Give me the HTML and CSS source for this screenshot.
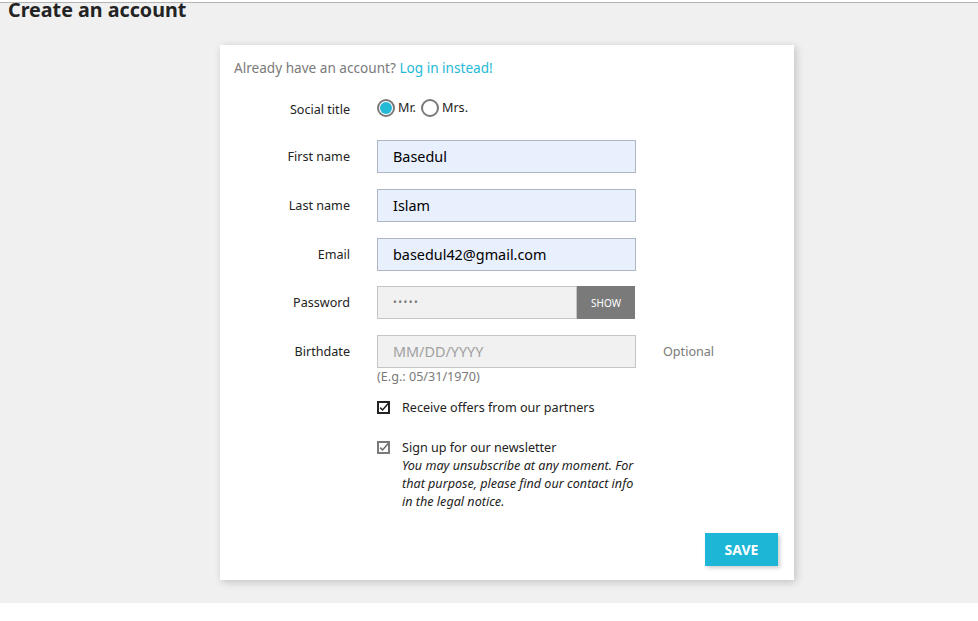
FILE: index.html
```html
<!DOCTYPE html>
<html>
<head>
<meta charset="utf-8">
<link rel="stylesheet" href="styles.css">
</head>
<body>
<div class="topline"></div>
<main class="wrapper">
  <h1 class="page-title">Create an account</h1>
  <section class="card">
    <p class="login-hint">Already have an account? <a href="#" class="link">Log in instead!</a></p>
    <form class="form">
      <div class="row row-social">
        <label class="label">Social title</label>
        <div class="radios">
          <span class="radio checked"><span class="dot"></span></span><span class="radio-text">Mr.</span>
          <span class="radio"></span><span class="radio-text">Mrs.</span>
        </div>
      </div>
      <div class="row">
        <label class="label">First name</label>
        <div class="input autofill">Basedul</div>
      </div>
      <div class="row">
        <label class="label">Last name</label>
        <div class="input autofill">Islam</div>
      </div>
      <div class="row">
        <label class="label">Email</label>
        <div class="input autofill">basedul42@gmail.com</div>
      </div>
      <div class="row">
        <label class="label">Password</label>
        <div class="pw-group">
          <div class="input plain pw">•••••</div>
          <button type="button" class="show-btn">SHOW</button>
        </div>
      </div>
      <div class="row row-birth">
        <label class="label">Birthdate</label>
        <div class="birth-col">
          <div class="input plain placeholder">MM/DD/YYYY</div>
          <div class="hint">(E.g.: 05/31/1970)</div>
        </div>
        <span class="optional">Optional</span>
      </div>
      <div class="check-row check-1">
        <span class="checkbox dark"><svg width="9" height="9" viewBox="0 0 9 9"><path d="M1.2 4.6 L3.6 7 L9.2 0.6" fill="none" stroke="#232323" stroke-width="1.5"/></svg></span>
        <span class="check-text">Receive offers from our partners</span>
      </div>
      <div class="check-row check-2">
        <span class="checkbox light"><svg width="9" height="9" viewBox="0 0 9 9"><path d="M1.2 4.6 L3.6 7 L9.2 0.6" fill="none" stroke="#6a6a6a" stroke-width="1.5"/></svg></span>
        <div class="check-text">
          <div>Sign up for our newsletter</div>
          <em class="note">You may unsubscribe at any moment. For that purpose, please find our contact info in the legal notice.</em>
        </div>
      </div>
      <div class="footer">
        <button type="button" class="save">SAVE</button>
      </div>
    </form>
  </section>
</main>
</body>
</html>
```
FILE: styles.css
```css
* { box-sizing: border-box; }
html, body { margin: 0; padding: 0; background: #fff; }
body { font-family: "Noto Sans", sans-serif; color: #232323; }

.topline { height: 3px; border-bottom: 1px solid #b3b3b3; background: #fff; }

.wrapper {
  background: #f0f0f0;
  height: 600px;
  padding: 0 0 0 8px;
}

.page-title {
  margin: 0;
  font-size: 19.7px;
  font-weight: 700;
  line-height: 14px;
  padding-top: 0;
  color: #232323;
}

.card {
  margin: 28px 0 0 212px;
  width: 574px;
  height: 535px;
  background: #fff;
  box-shadow: 2px 2px 8px 0 rgba(0,0,0,0.2);
  padding: 13px 14px 0 14px;
}

.login-hint {
  margin: 0;
  font-size: 13.6px;
  line-height: 20px;
  color: #7a7a7a;
}
.link { color: #24b9d7; text-decoration: none; }

.form { margin-top: 20px; }

.row {
  display: grid;
  grid-template-columns: 116px 259px auto;
  column-gap: 27px;
  align-items: center;
  margin-bottom: 15.75px;
}
.label {
  text-align: right;
  font-size: 12.6px;
  color: #232323;
}
.row-social { height: 20px; margin-bottom: 22px; }
.row-social .label { position: relative; top: 1px; }

.radios { display: flex; align-items: center; font-size: 12.6px; }
.radio {
  width: 18px; height: 18px;
  border: 2px solid #7a7a7a;
  border-radius: 50%;
  display: inline-flex; align-items: center; justify-content: center;
}
.radio .dot { width: 12px; height: 12px; border-radius: 50%; background: #24b9d7; }
.radio-text { margin: 0 5px 0 3px; position: relative; top: -1px; }

.input {
  height: 33px;
  width: 259px;
  padding: 0 15px;
  font-size: 14.4px;
  line-height: 31px;
  border: 1px solid rgba(0,0,0,0.25);
}
.autofill { background: #e8effd; border-color: #aeb5c3; color: #000; }
.plain { background: #f1f1f1; border-color: #c5c5c5; }
.pw-group { display: flex; width: 258px; }
.pw { width: 200px; font-size: 10px; letter-spacing: 1.5px; color: #7a7a7a; }
.show-btn {
  width: 58px; height: 33px;
  border: 0;
  background: #7a7a7a;
  color: #fff;
  font-family: "Noto Sans", sans-serif;
  font-size: 10px;
  padding: 0;
}
.placeholder { color: #a0a0a0; }

.row-birth { align-items: start; margin-bottom: 14px; }
.row-birth .label { line-height: 33px; }
.hint { font-size: 12.6px; line-height: 17px; color: #7a7a7a; margin-top: 0px; }
.optional { font-size: 12.6px; line-height: 33px; color: #7a7a7a; }

.check-row {
  display: flex;
  align-items: flex-start;
  margin-left: 143px;
  font-size: 12.6px;
}
.check-1 { margin-bottom: 22px; }
.checkbox {
  width: 13px; height: 13px;
  display: inline-flex; align-items: center; justify-content: center;
  margin-top: 2px;
  flex: none;
}
.checkbox.dark { border: 2px solid #232323; }
.checkbox.light { border: 2px solid #7a7a7a; }
.checkbox svg { display: block; overflow: visible; }
.check-text { margin-left: 12px; line-height: 18px; }
.note { display: block; font-size: 12.6px; line-height: 18px; width: 240px; }

.footer { display: flex; justify-content: flex-end; margin-top: 22px; padding-right: 2px; }
.save {
  width: 73px; height: 33px;
  border: 0;
  background: #1db6d6;
  color: #fff;
  font-family: "Noto Sans", sans-serif;
  font-weight: 700;
  font-size: 14px;
  box-shadow: 2px 2px 4px 0 rgba(0,0,0,0.2);
}
```
